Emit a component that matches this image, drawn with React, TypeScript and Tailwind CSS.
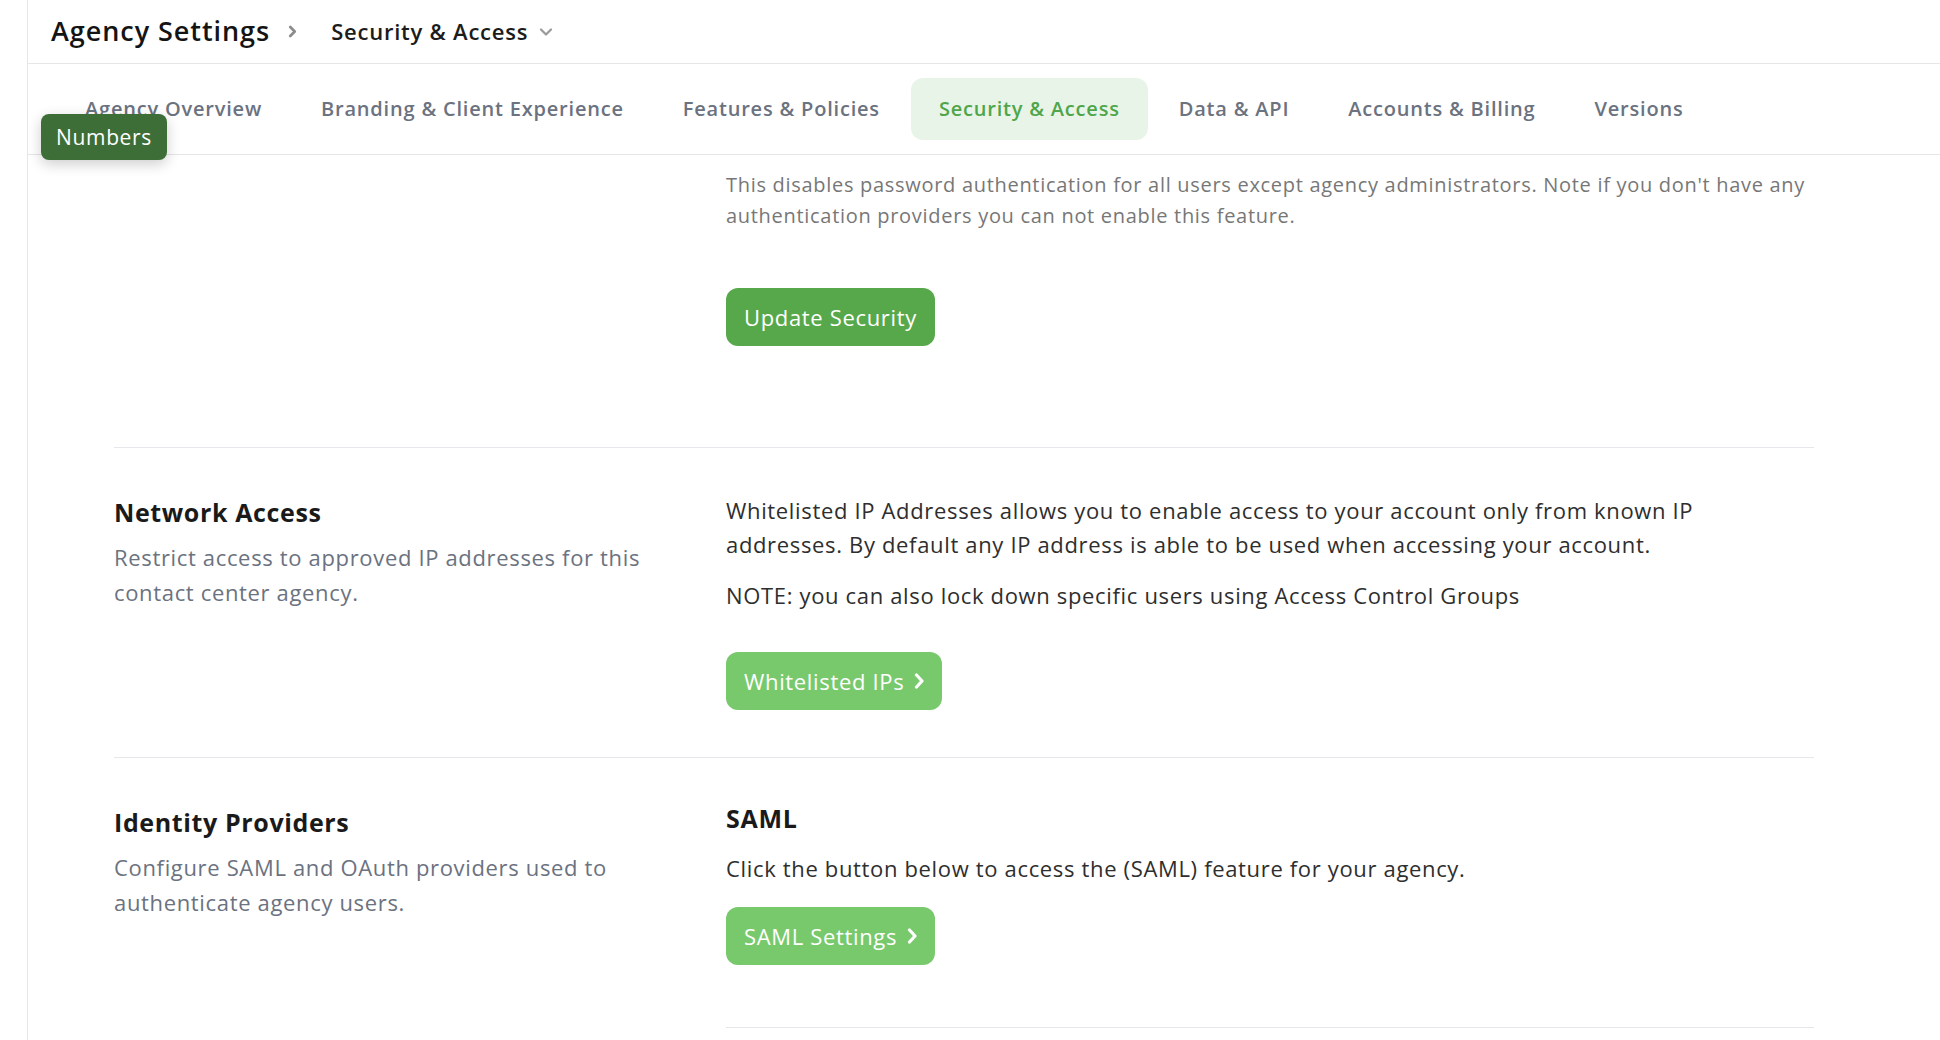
const tabs = [
  "Agency Overview",
  "Branding & Client Experience",
  "Features & Policies",
  "Security & Access",
  "Data & API",
  "Accounts & Billing",
  "Versions",
];

const activeTab = "Security & Access";

const ChevronRight = ({ className }: { className?: string }) => (
  <svg viewBox="0 0 10 14" className={className} fill="none">
    <path d="M2.5 2l5 5-5 5" stroke="currentColor" strokeWidth="3" strokeLinecap="round" strokeLinejoin="round" />
  </svg>
);

const ChevronDown = ({ className }: { className?: string }) => (
  <svg viewBox="0 0 14 8" className={className} fill="none">
    <path d="M2 1.5l5 5 5-5" stroke="currentColor" strokeWidth="2.2" strokeLinecap="round" strokeLinejoin="round" />
  </svg>
);

const ButtonChevron = () => (
  <svg viewBox="0 0 10 16" className="ml-[10px] h-[16px] w-[10px]" fill="none">
    <path d="M2.5 2l5.5 6-5.5 6" stroke="currentColor" strokeWidth="3.2" strokeLinecap="round" strokeLinejoin="round" />
  </svg>
);

export default function App() {
  return (
    <div className="relative h-[1040px] overflow-hidden bg-white pl-[27px] font-['Open_Sans',sans-serif]">
      <div className="h-full border-l border-[#e6e6e6]">
        <header className="flex h-[64px] items-center border-b border-[#e6e6e6] pl-[23px]">
          <h1 className="text-[27px] font-semibold tracking-[0.035em] text-[#141414]">Agency Settings</h1>
          <ChevronRight className="ml-[18px] h-[13px] w-[9px] text-[#8c8c8c]" />
          <button className="ml-[34px] flex items-center text-[22px] font-semibold tracking-[0.035em] text-[#1c1c1c]">
            Security &amp; Access
            <ChevronDown className="ml-[11px] h-[8px] w-[14px] text-[#9a9a9a]" />
          </button>
        </header>

        <nav className="flex h-[91px] items-center gap-[3px] border-b border-[#e6e6e6] pl-[29px]">
          {tabs.map((tab) => (
            <button
              key={tab}
              className={`flex h-[62px] items-center rounded-[12px] px-[28px] text-[20px] font-semibold tracking-[0.04em] ${
                tab === activeTab ? "bg-[#e9f4e8] text-[#4fa64a]" : "text-[#6b7280]"
              }`}
            >
              {tab}
            </button>
          ))}
        </nav>

        <main className="px-[86px] pt-[14px]">
          <div className="w-[1700px]">
            {/* password auth */}
            <section className="grid grid-cols-[612px_1088px] border-b border-[#e5e7eb] pb-[101px]">
              <div />
              <div>
                <p className="text-[20px] leading-[31px] tracking-[0.035em] text-[#777777]">
                  This disables password authentication for all users except agency administrators. Note if you don't have any
                  authentication providers you can not enable this feature.
                </p>
                <button className="mt-[57px] flex h-[58px] items-center rounded-[12px] bg-[#57a84a] px-[18px] text-[22px] tracking-[0.03em] text-white">
                  Update Security
                </button>
              </div>
            </section>

            {/* network access */}
            <section className="grid grid-cols-[612px_1088px] border-b border-[#e5e7eb] pt-[44px] pb-[47px]">
              <div className="pr-[48px]">
                <h2 className="mb-[8px] text-[25px] font-bold leading-[40px] tracking-[0.025em] text-[#1a1a1a]">Network Access</h2>
                <p className="text-[22px] leading-[35px] tracking-[0.03em] text-[#6b7280]">
                  Restrict access to approved IP addresses for this contact center agency.
                </p>
              </div>
              <div className="pt-[1px] text-[22px] leading-[34px] tracking-[0.03em] text-[#2e2e2e]">
                <p className="mb-[17px] max-w-[1040px]">
                  Whitelisted IP Addresses allows you to enable access to your account only from known IP addresses. By default any IP
                  address is able to be used when accessing your account.
                </p>
                <p>NOTE: you can also lock down specific users using Access Control Groups</p>
                <button className="mt-[40px] flex h-[58px] items-center rounded-[12px] bg-[#78c96c] px-[18px] text-white">
                  Whitelisted IPs
                  <ButtonChevron />
                </button>
              </div>
            </section>

            {/* identity providers */}
            <section className="grid grid-cols-[612px_1088px] pt-[44px]">
              <div className="pr-[48px]">
                <h2 className="mb-[8px] text-[25px] font-bold leading-[40px] tracking-[0.025em] text-[#1a1a1a]">
                  Identity Providers
                </h2>
                <p className="text-[22px] leading-[35px] tracking-[0.03em] text-[#6b7280]">
                  Configure SAML and OAuth providers used to authenticate agency users.
                </p>
              </div>
              <div className="pt-[1px]">
                <h3 className="mb-[18px] text-[25px] font-bold leading-[30px] tracking-[0.03em] text-[#1a1a1a]">SAML</h3>
                <p className="text-[22px] leading-[34px] tracking-[0.03em] text-[#2e2e2e]">
                  Click the button below to access the (SAML) feature for your agency.
                </p>
                <button className="mt-[22px] flex h-[58px] items-center rounded-[12px] bg-[#78c96c] px-[18px] text-[22px] tracking-[0.03em] text-white">
                  SAML Settings
                  <ButtonChevron />
                </button>
                <div className="mt-[62px] border-t border-[#e5e7eb]" />
              </div>
            </section>
          </div>
        </main>
      </div>

      <div className="absolute left-[41px] top-[114px] flex h-[46px] w-[126px] items-center justify-center rounded-[8px] bg-[#3e6e37] pt-[2px] text-[21px] tracking-[0.03em] text-white shadow-[0_4px_14px_rgba(0,0,0,0.2)]">
        Numbers
      </div>
    </div>
  );
}
